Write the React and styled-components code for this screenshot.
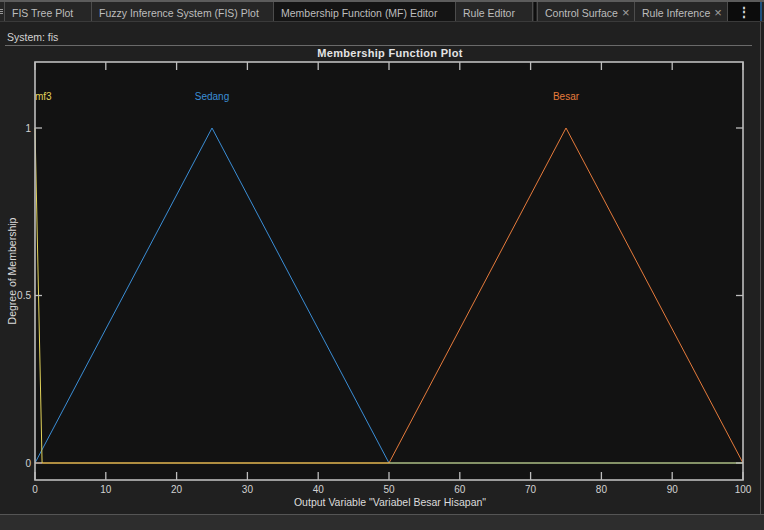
import React from 'react';
import styled, { createGlobalStyle } from 'styled-components';

const GlobalStyle = createGlobalStyle`
  html, body {
    margin: 0;
    padding: 0;
    background: #202020;
    font-family: 'Liberation Sans', Arial, sans-serif;
  }
`;

const tabs = [
  { label: 'FIS Tree Plot', width: 87 },
  { label: 'Fuzzy Inference System (FIS) Plot', width: 182 },
  { label: 'Membership Function (MF) Editor', width: 182, active: true },
  { label: 'Rule Editor', width: 77 },
  { divider: true },
  { label: 'Control Surface', width: 97, closable: true },
  { label: 'Rule Inference', width: 93, closable: true },
];

// axes geometry (page coords)
const AX = { left: 35, right: 743, top: 62, bottom: 480 };
const xPos = v => AX.left + (v / 100) * (AX.right - AX.left);
const yPos = v => 463 - v * 335;
const xTicks = [0, 10, 20, 30, 40, 50, 60, 70, 80, 90, 100];
const yTicks = [
  { v: 0, label: '0' },
  { v: 0.5, label: '0.5' },
  { v: 1, label: '1' },
];

const mfs = [
  { name: 'Sedang', color: '#3b8ed6', pts: [[0, 0], [25, 1], [50, 0], [100, 0]], labelX: xPos(25), anchor: 'middle' },
  { name: 'Besar', color: '#e67b3c', pts: [[0, 0], [50, 0], [75, 1], [100, 0]], labelX: xPos(75), anchor: 'middle' },
  { name: 'mf3', color: '#e2d35a', pts: [[0, 1], [1, 0], [100, 0]], labelX: 35, anchor: 'start' },
];

const App = () => {
  return (
    <Page>
      <GlobalStyle />
      <TabBar>
        <Grip>
          <span />
          <span />
          <span />
        </Grip>
        {tabs.map((t, i) =>
          t.divider ? (
            <TabDivider key={i} />
          ) : (
            <Tab key={i} $width={t.width} $active={t.active}>
              {t.label}
              {t.closable && <Close>×</Close>}
            </Tab>
          )
        )}
        <MenuButton>⋮</MenuButton>
        <BlueEdge />
      </TabBar>
      <Content>
        <SystemRow>System: fis</SystemRow>
        <PlotArea>
          <svg width="756" height="468" viewBox="0 46 756 468">
            <text x="390" y="57" fill="#e4e4e4" fontSize="11" fontWeight="bold" textAnchor="middle" letterSpacing="0.3">
              Membership Function Plot
            </text>
            <rect x={AX.left} y={AX.top} width={AX.right - AX.left} height={AX.bottom - AX.top} fill="#121212" />
            {mfs.map(m => (
              <polyline
                key={m.name}
                points={m.pts.map(([x, y]) => `${xPos(x)},${yPos(y)}`).join(' ')}
                fill="none"
                stroke={m.color}
                strokeWidth="1"
              />
            ))}
            {mfs.map(m => (
              <text key={m.name + 'l'} x={m.labelX} y="100" fill={m.color} fontSize="10" textAnchor={m.anchor}>
                {m.name}
              </text>
            ))}
            <rect
              x={AX.left}
              y={AX.top}
              width={AX.right - AX.left}
              height={AX.bottom - AX.top}
              fill="none"
              stroke="#bdbdbd"
              strokeWidth="1.6"
            />
            {xTicks.map(v => (
              <g key={v}>
                <line x1={xPos(v)} x2={xPos(v)} y1={AX.top} y2={AX.top + 8} stroke="#bdbdbd" strokeWidth="1.3" />
                <line x1={xPos(v)} x2={xPos(v)} y1={AX.bottom - 8} y2={AX.bottom} stroke="#bdbdbd" strokeWidth="1.3" />
                <text x={xPos(v)} y="493" fill="#d2d2d2" fontSize="10" textAnchor="middle">
                  {v}
                </text>
              </g>
            ))}
            {yTicks.map(t => (
              <g key={t.v}>
                <line x1={AX.left} x2={AX.left + 7} y1={yPos(t.v)} y2={yPos(t.v)} stroke="#bdbdbd" strokeWidth="1.3" />
                <line x1={AX.right - 7} x2={AX.right} y1={yPos(t.v)} y2={yPos(t.v)} stroke="#bdbdbd" strokeWidth="1.3" />
                <text x="31" y={yPos(t.v) + 3.5} fill="#d2d2d2" fontSize="10" textAnchor="end">
                  {t.label}
                </text>
              </g>
            ))}
            <text x="390" y="506" fill="#dcdcdc" fontSize="10.5" textAnchor="middle">
              Output Variable "Variabel Besar Hisapan"
            </text>
            <text
              x="0"
              y="0"
              transform="translate(16 271) rotate(-90)"
              fill="#dcdcdc"
              fontSize="10.5"
              textAnchor="middle"
            >
              Degree of Membership
            </text>
          </svg>
        </PlotArea>
      </Content>
      <Footer />
    </Page>
  );
};
export default App;

const Page = styled.div`
  width: 764px;
  height: 530px;
  display: flex;
  flex-direction: column;
  overflow: hidden;
  background: #202020;
`;

const TabBar = styled.div`
  display: flex;
  height: 19px;
  border-top: 2px solid #5c5c5c;
  border-bottom: 1px solid #3a3a3a;
  background: #262626;
`;

const Grip = styled.div`
  width: 4px;
  display: flex;
  flex-direction: column;
  justify-content: center;
  gap: 1px;
  span {
    display: block;
    width: 3px;
    height: 1px;
    background: #9a9a9a;
  }
`;

const Tab = styled.div`
  width: ${p => p.$width}px;
  box-sizing: border-box;
  display: flex;
  align-items: center;
  padding: 3px 0 0 7px;
  font-size: 10.5px;
  color: #bdbdbd;
  white-space: nowrap;
  background: ${p => (p.$active ? '#141414' : '#262626')};
  border-left: 1px solid #4c4c4c;
`;

const Close = styled.span`
  margin-left: 4px;
  font-size: 13px;
  line-height: 10px;
  font-weight: 300;
  color: #a0a0a0;
`;

const TabDivider = styled.div`
  width: 5px;
  border-left: 1px solid #4c4c4c;
  box-sizing: border-box;
  display: flex;
  justify-content: center;
  &::after {
    content: '';
    width: 2px;
    background: #0e0e0e;
  }
`;

const MenuButton = styled.div`
  width: 32px;
  display: flex;
  align-items: center;
  justify-content: center;
  background: #0c0c0c;
  border-left: 1px solid #4c4c4c;
  color: #e0e0e0;
  font-size: 12px;
  font-weight: bold;
`;

const BlueEdge = styled.div`
  width: 2px;
  background: #1f4f7d;
  margin-right: auto;
`;

const Content = styled.div`
  flex: 1;
  display: flex;
  flex-direction: column;
  margin-right: 3px;
  border-right: 1px solid #505050;
  background: #202020;
`;

const SystemRow = styled.div`
  height: 24px;
  flex-shrink: 0;
  margin: 0 8px 0 5px;
  padding-left: 2px;
  display: flex;
  align-items: flex-end;
  padding-bottom: 2px;
  box-sizing: border-box;
  border-bottom: 1px solid #6a6a6a;
  font-size: 10.5px;
  color: #d4d4d4;
`;

const PlotArea = styled.div`
  flex: 1;
  overflow: hidden;
  svg {
    display: block;
    font-family: 'Liberation Sans', Arial, sans-serif;
  }
`;

const Footer = styled.div`
  height: 15px;
  flex-shrink: 0;
  border-top: 1px solid #555555;
  background: #2d2d2d;
`;
